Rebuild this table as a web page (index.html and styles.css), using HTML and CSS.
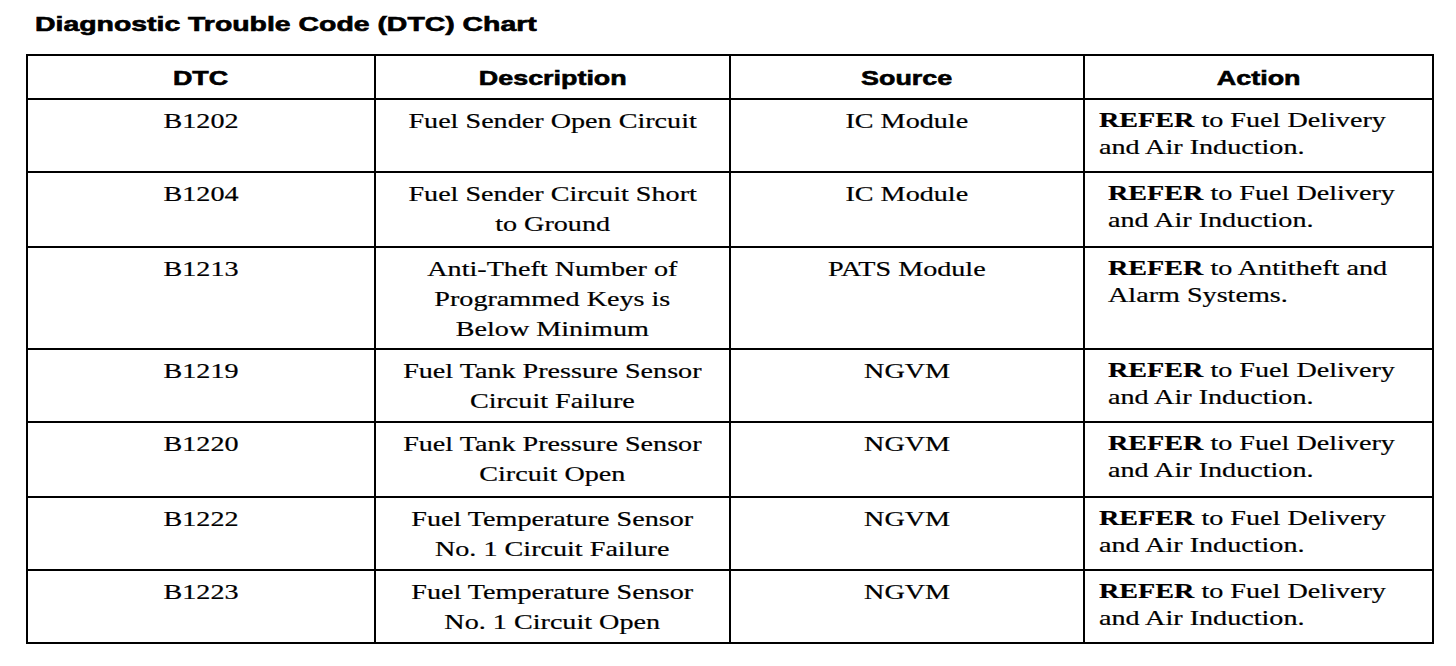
FILE: index.html
```html
<!DOCTYPE html>
<html lang="en">
<head>
<meta charset="utf-8">
<title>Diagnostic Trouble Code (DTC) Chart</title>
<link rel="stylesheet" href="styles.css">
</head>
<body>
<h1 class="title"><span class="sx">Diagnostic Trouble Code (DTC) Chart</span></h1>
<table class="chart">
  <colgroup>
    <col class="c1"><col class="c2"><col class="c3"><col class="c4">
  </colgroup>
  <thead>
    <tr class="hrow">
      <th><span class="sx">DTC</span></th>
      <th><span class="sx">Description</span></th>
      <th><span class="sx">Source</span></th>
      <th><span class="sx">Action</span></th>
    </tr>
  </thead>
  <tbody>
    <tr class="r73">
      <td><span class="sx">B1202</span></td>
      <td><span class="sx">Fuel Sender Open Circuit</span></td>
      <td><span class="sx">IC Module</span></td>
      <td class="act"><span class="sx"><b>REFER</b> to Fuel Delivery<br>and Air Induction.</span></td>
    </tr>
    <tr class="r75">
      <td><span class="sx">B1204</span></td>
      <td><span class="sx">Fuel Sender Circuit Short<br>to Ground</span></td>
      <td><span class="sx">IC Module</span></td>
      <td class="act ind"><span class="sx"><b>REFER</b> to Fuel Delivery<br>and Air Induction.</span></td>
    </tr>
    <tr class="r102">
      <td><span class="sx">B1213</span></td>
      <td><span class="sx">Anti-Theft Number of<br>Programmed Keys is<br>Below Minimum</span></td>
      <td><span class="sx">PATS Module</span></td>
      <td class="act ind"><span class="sx"><b>REFER</b> to Antitheft and<br>Alarm Systems.</span></td>
    </tr>
    <tr class="r73">
      <td><span class="sx">B1219</span></td>
      <td><span class="sx">Fuel Tank Pressure Sensor<br>Circuit Failure</span></td>
      <td><span class="sx">NGVM</span></td>
      <td class="act ind"><span class="sx"><b>REFER</b> to Fuel Delivery<br>and Air Induction.</span></td>
    </tr>
    <tr class="r75">
      <td><span class="sx">B1220</span></td>
      <td><span class="sx">Fuel Tank Pressure Sensor<br>Circuit Open</span></td>
      <td><span class="sx">NGVM</span></td>
      <td class="act ind"><span class="sx"><b>REFER</b> to Fuel Delivery<br>and Air Induction.</span></td>
    </tr>
    <tr class="r73">
      <td><span class="sx">B1222</span></td>
      <td><span class="sx">Fuel Temperature Sensor<br>No. 1 Circuit Failure</span></td>
      <td><span class="sx">NGVM</span></td>
      <td class="act"><span class="sx"><b>REFER</b> to Fuel Delivery<br>and Air Induction.</span></td>
    </tr>
    <tr class="r73">
      <td><span class="sx">B1223</span></td>
      <td><span class="sx">Fuel Temperature Sensor<br>No. 1 Circuit Open</span></td>
      <td><span class="sx">NGVM</span></td>
      <td class="act"><span class="sx"><b>REFER</b> to Fuel Delivery<br>and Air Induction.</span></td>
    </tr>
  </tbody>
</table>
</body>
</html>
```
FILE: styles.css
```css
html, body {
  margin: 0;
  padding: 0;
  background: #ffffff;
  color: #000000;
}

.sx {
  display: inline-block;
  transform-origin: center top;
}

.title {
  margin: 12px 0 18px 35px;
  font: bold 20px/24px "Liberation Sans", Arial, sans-serif;
  -webkit-text-stroke: 0.6px #000;
}

.title .sx {
  transform: scaleX(1.42);
  transform-origin: left top;
}

.chart {
  margin-left: 26px;
  width: 1408px;
  box-sizing: border-box;
  table-layout: fixed;
  border-collapse: separate;
  border-spacing: 0;
  border-top: 2px solid #000;
  border-left: 2px solid #000;
}

.c1 { width: 348px; }
.c2 { width: 355px; }
.c3 { width: 354px; }
.c4 { width: 349px; }

.chart th,
.chart td {
  box-sizing: border-box;
  border-right: 2px solid #000;
  border-bottom: 2px solid #000;
  vertical-align: top;
  text-align: center;
  padding: 0;
}

.chart th {
  padding-top: 10px;
  font: bold 21px/24px "Liberation Sans", Arial, sans-serif;
  -webkit-text-stroke: 0.6px #000;
}

.chart th .sx {
  transform: scaleX(1.28);
}

.chart td {
  padding-top: 6px;
  font: 21px/30px "Liberation Serif", "Times New Roman", serif;
  -webkit-text-stroke: 0.2px #000;
}

.chart td .sx {
  transform: scaleX(1.34);
}

.chart td.act {
  text-align: left;
  line-height: 27px;
  padding: 7px 0 0 14px;
}

.chart td.act.ind {
  padding-left: 23px;
}

.chart td.act .sx {
  transform-origin: left top;
}

.hrow { height: 44px; }
.r73 { height: 73px; }
.r75 { height: 75px; }
.r102 { height: 102px; }
```
